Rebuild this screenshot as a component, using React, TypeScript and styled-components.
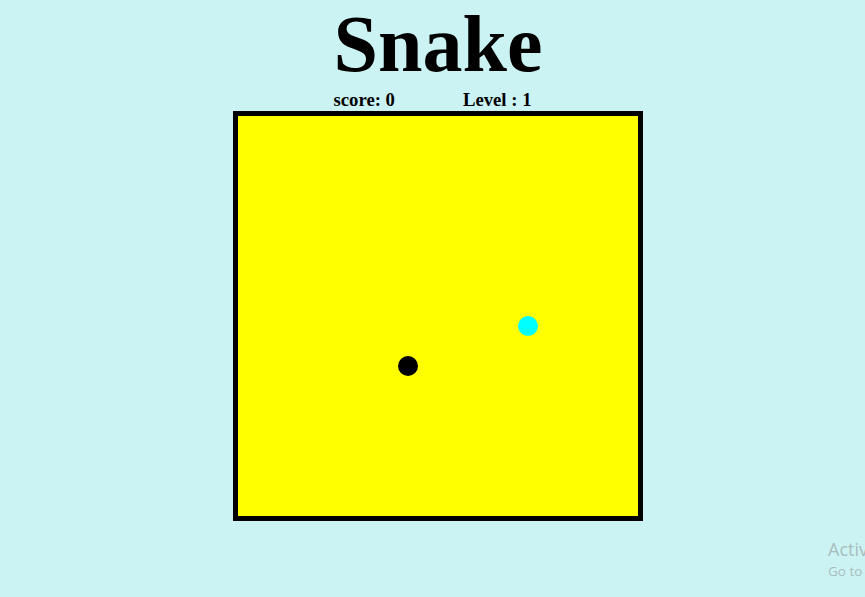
import styled, { createGlobalStyle } from "styled-components";

const GlobalStyle = createGlobalStyle`
  html, body {
    margin: 0;
    padding: 0;
    height: 100%;
    overflow: hidden;
    background: #cbf3f3;
  }
`;

const Page = styled.div`
  position: relative;
  width: 865px;
  height: 597px;
  display: flex;
  flex-direction: column;
  align-items: center;
  font-family: "Liberation Serif", "Times New Roman", serif;
  color: #000;
`;

const Title = styled.h1`
  margin: 4px 0 0 11px;
  font-size: 80px;
  line-height: 80px;
  font-weight: bold;
`;

const Stats = styled.div`
  display: flex;
  gap: 68px;
  margin-top: 6px;
  font-size: 18.72px;
  line-height: 20px;
  font-weight: bold;
`;

const Board = styled.div`
  position: relative;
  margin: 1px 0 0 11px;
  width: 400px;
  height: 400px;
  border: 5px solid #000;
  background: #ffff00;
`;

const Dot = styled.div<{ $color: string }>`
  position: absolute;
  width: 20px;
  height: 20px;
  border-radius: 50%;
  background: ${(p) => p.$color};
`;

const Watermark = styled.div`
  position: absolute;
  left: 828px;
  top: 537px;
  font-family: "Open Sans", "Noto Sans", sans-serif;
  color: #a9bdbd;
  white-space: nowrap;
`;

const WatermarkTitle = styled.div`
  font-size: 18px;
  line-height: 24px;
`;

const WatermarkSub = styled.div`
  font-size: 13.5px;
  line-height: 20px;
`;

type Cell = { x: number; y: number };

const CELL = 20;
const snake: Cell = { x: 8, y: 12 };
const food: Cell = { x: 14, y: 10 };

function App() {
  return (
    <>
      <GlobalStyle />
      <Page>
        <Title>Snake</Title>
        <Stats>
          <span>score: 0</span>
          <span>Level : 1</span>
        </Stats>
        <Board>
          <Dot $color="#000" style={{ left: snake.x * CELL, top: snake.y * CELL }} />
          <Dot $color="#00ffff" style={{ left: food.x * CELL, top: food.y * CELL }} />
        </Board>
        <Watermark>
          <WatermarkTitle>Activate Windows</WatermarkTitle>
          <WatermarkSub>Go to Settings to activate Windows.</WatermarkSub>
        </Watermark>
      </Page>
    </>
  );
}

export default App;
